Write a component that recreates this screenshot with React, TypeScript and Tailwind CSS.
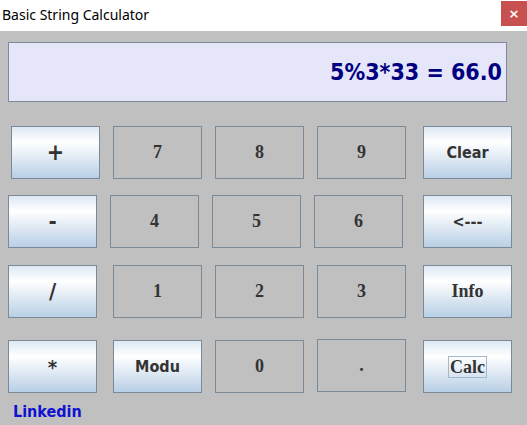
import React from "react";

const SANS = "font-['DejaVu_Sans_Condensed','DejaVu_Sans',sans-serif]";
const SERIF = "font-['Liberation_Serif',serif]";

const glossy =
  "bg-[linear-gradient(to_bottom,#dde8f3_0%,#ffffff_30%,#b8cfe5_100%)]";

function Btn({
  label,
  kind,
  font,
  className = "",
  focus = false,
}: {
  label: string;
  kind: "op" | "num";
  font: "sans" | "serif";
  className?: string;
  focus?: boolean;
}) {
  return (
    <button
      className={`w-[89px] h-[53px] shrink-0 border border-[#7a8a99] flex items-center justify-center font-bold text-[#333333] ${
        kind === "op" ? glossy : "bg-transparent"
      } ${font === "sans" ? `${SANS} text-[16px]` : `${SERIF} text-[18px]`} ${className}`}
    >
      {focus ? (
        <span className="border border-[#a3b8cc] px-px leading-[20px]">{label}</span>
      ) : (
        label
      )}
    </button>
  );
}

export default function App() {
  return (
    <div className="w-[527px] h-[425px] bg-[#c0c0c0] overflow-hidden flex flex-col">
      {/* title bar */}
      <div className="h-[31px] bg-white flex items-start justify-between shrink-0">
        <span className="pl-[2px] pt-[5px] text-[14px] text-black font-['Noto_Sans',sans-serif] leading-[20px]">
          Basic String Calculator
        </span>
        <div className="w-[26px] h-[25px] mt-[1px] bg-[#c75050] flex items-center justify-center text-white text-[13px] font-bold font-['DejaVu_Sans',sans-serif]">
          ×
        </div>
      </div>

      {/* display */}
      <div className="mt-[11px] ml-[8px] w-[499px] h-[60px] border border-[#7a8a99] bg-[#e6e6fa] flex items-center justify-end pr-[4px]">
        <span className={`${SANS} font-bold text-[23px] text-[#000080]`}>5%3*33 = 66.0</span>
      </div>

      {/* row 1 */}
      <div className="flex mt-[24px]">
        <Btn label="+" kind="op" font="sans" className="ml-[11px] text-[23px]" />
        <Btn label="7" kind="num" font="serif" className="ml-[13px]" />
        <Btn label="8" kind="num" font="serif" className="ml-[13px]" />
        <Btn label="9" kind="num" font="serif" className="ml-[13px]" />
        <Btn label="Clear" kind="op" font="sans" className="ml-[17px]" />
      </div>

      {/* row 2 */}
      <div className="flex mt-[16px]">
        <Btn label="-" kind="op" font="sans" className="ml-[8px] text-[22px]" />
        <Btn label="4" kind="num" font="serif" className="ml-[13px]" />
        <Btn label="5" kind="num" font="serif" className="ml-[13px]" />
        <Btn label="6" kind="num" font="serif" className="ml-[13px]" />
        <Btn label="<---" kind="op" font="sans" className="ml-[20px]" />
      </div>

      {/* row 3 */}
      <div className="flex mt-[17px]">
        <Btn label="/" kind="op" font="sans" className="ml-[8px] text-[22px]" />
        <Btn label="1" kind="num" font="serif" className="ml-[16px]" />
        <Btn label="2" kind="num" font="serif" className="ml-[13px]" />
        <Btn label="3" kind="num" font="serif" className="ml-[13px]" />
        <Btn label="Info" kind="op" font="serif" className="ml-[17px]" />
      </div>

      {/* row 4 */}
      <div className="flex items-start mt-[22px]">
        <Btn label="*" kind="op" font="sans" className="ml-[8px] text-[20px]" />
        <Btn label="Modu" kind="op" font="sans" className="ml-[16px]" />
        <Btn label="0" kind="num" font="serif" className="ml-[13px]" />
        <Btn label="." kind="num" font="serif" className="ml-[13px] -mt-px" />
        <Btn label="Calc" kind="op" font="serif" className="ml-[17px]" focus />
      </div>

      <div className={`ml-[13px] mt-[9px] ${SANS} font-bold text-[16px] leading-[20px] text-[#1010d0]`}>
        Linkedin
      </div>
    </div>
  );
}
